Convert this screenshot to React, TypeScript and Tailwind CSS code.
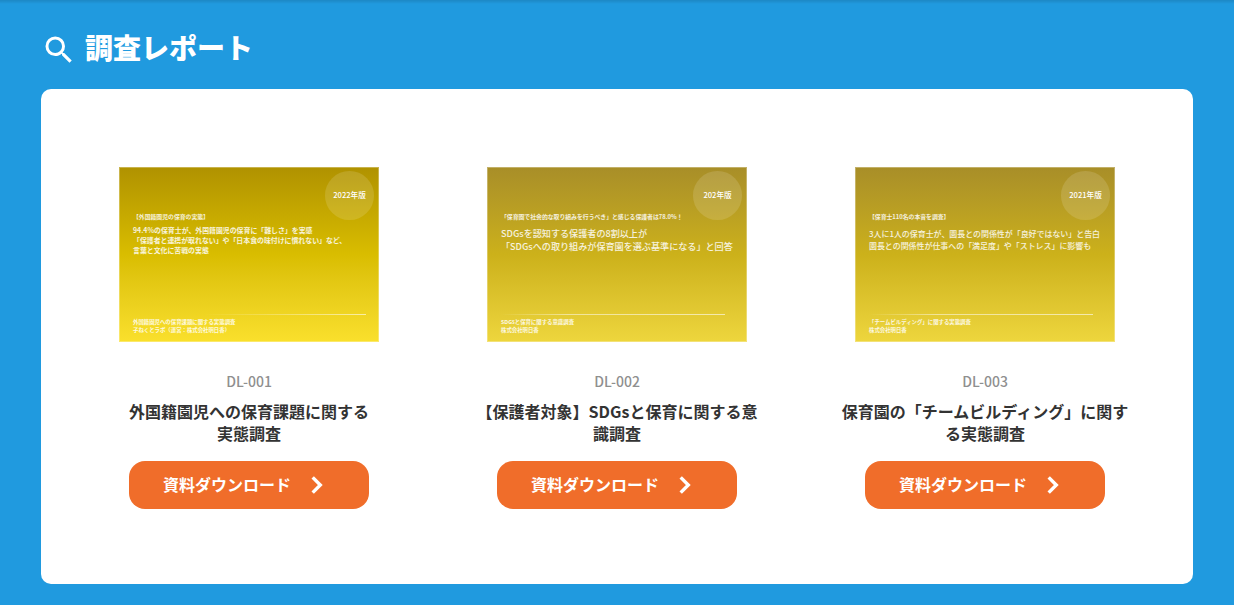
import React from "react"
import { MdSearch } from "react-icons/md"

type Report = {
  id: string
  title: string[]
  badge: string
  lead: string
  headline: string[]
  footer: string[]
  bgClass: string
  headlineClass: string
  ruleClass: string
}

const reports: Report[] = [
  {
    id: "DL-001",
    title: ["外国籍園児への保育課題に関する", "実態調査"],
    badge: "2022年版",
    lead: "【外国籍園児の保育の実態】",
    headline: [
      "94.4%の保育士が、外国籍園児の保育に「難しさ」を実感",
      "「保護者と連携が取れない」や「日本食の味付けに慣れない」など、",
      "言葉と文化に苦戦の実態",
    ],
    footer: ["外国籍園児への保育課題に関する実態調査", "子ねくとラボ（運営：株式会社明日香）"],
    bgClass: "from-[#b09200] via-[#d9bd00] to-[#fae02c]",
    headlineClass: "mt-[3px] text-[6.9px] leading-[10px] font-bold",
    ruleClass: "mr-[13px] via-white/0",
  },
  {
    id: "DL-002",
    title: ["【保護者対象】SDGsと保育に関する意", "識調査"],
    badge: "202年版",
    lead: "「保育園で社会的な取り組みを行うべき」と感じる保護者は78.0%！",
    headline: ["SDGsを認知する保護者の8割以上が", "「SDGsへの取り組みが保育園を選ぶ基準になる」と回答"],
    footer: ["SDGsと保育に関する意識調査", "株式会社明日香"],
    bgClass: "from-[#a88e28] via-[#ccb11a] to-[#eed63d]",
    headlineClass: "mt-[5px] text-[9.1px] leading-[12.7px] font-medium",
    ruleClass: "mr-[22px] via-white/50",
  },
  {
    id: "DL-003",
    title: ["保育園の「チームビルディング」に関す", "る実態調査"],
    badge: "2021年版",
    lead: "【保育士110名の本音を調査】",
    headline: [
      "3人に1人の保育士が、園長との関係性が「良好ではない」と告白",
      "園長との関係性が仕事への「満足度」や「ストレス」に影響も",
    ],
    footer: ["「チームビルディング」に関する実態調査", "株式会社明日香"],
    bgClass: "from-[#a88e28] via-[#ccb11a] to-[#eed63d]",
    headlineClass: "mt-[6px] text-[7.95px] leading-[11.5px] font-medium",
    ruleClass: "mr-[22px] via-white/50",
  },
]

function ChevronIcon({ className }: { className?: string }) {
  return (
    <svg viewBox="0 0 36 36" fill="none" stroke="currentColor" strokeWidth="3.4" className={className}>
      <path d="M13.7 10.4 21.3 18l-7.6 7.6" />
    </svg>
  )
}

function Thumbnail({ report }: { report: Report }) {
  return (
    <div
      className={`relative flex h-[175px] w-[260px] flex-col bg-gradient-to-b pt-px pl-[14px] text-white/85 whitespace-nowrap shadow-[inset_0_0_0_1px_rgba(255,255,255,0.3)] ${report.bgClass}`}
    >
      <div className="absolute top-[4px] right-[5px] flex size-[49px] items-center justify-center rounded-full bg-white/13 pb-0.5 text-[7.6px] font-medium text-white">
        {report.badge}
      </div>
      <p className="mt-[44px] text-[5.85px] leading-[10px] font-bold">{report.lead}</p>
      <div className={report.headlineClass}>
        {report.headline.map((line) => (
          <p key={line}>{line}</p>
        ))}
      </div>
      <div
        className={`mt-auto h-px bg-gradient-to-r from-white/0 via-30% to-white/60 ${report.ruleClass}`}
      />
      <div className="mt-[3px] mb-[8px] text-[5.4px] leading-[8px] font-bold">
        {report.footer.map((line) => (
          <p key={line}>{line}</p>
        ))}
      </div>
    </div>
  )
}

function ReportCard({ report }: { report: Report }) {
  return (
    <div className="flex w-[368px] flex-col items-center">
      <Thumbnail report={report} />
      <p className="mt-[29px] text-sm leading-5 font-medium text-[#8f8f8f]">{report.id}</p>
      <h3 className="mt-[9px] text-center text-base leading-[22px] font-bold whitespace-nowrap text-[#333]">
        {report.title[0]}
        <br />
        {report.title[1]}
      </h3>
      <a
        href="#"
        className="mt-[17px] flex h-12 w-60 items-center justify-center gap-2 rounded-2xl bg-[#f06d2a] font-bold text-white"
      >
        <span className="pb-0.5">資料ダウンロード</span>
        <ChevronIcon className="size-9" />
      </a>
    </div>
  )
}

function App() {
  return (
    <section
      lang="ja"
      className="h-[605px] overflow-hidden bg-[#209adf] font-['Noto_Sans_CJK_JP',sans-serif]"
    >
      <div className="h-1 bg-gradient-to-b from-black/12 to-transparent" />
      <div className="px-[41px]">
        <div className="flex h-[85px] items-center gap-2 pt-[7px] text-white">
          <MdSearch className="size-9" />
          <h2 className="-mt-1.5 text-[28px] leading-10 font-black">調査レポート</h2>
        </div>
        <div className="flex h-[495px] w-[1152px] justify-center rounded-[10px] bg-white pt-[78px]">
          {reports.map((report) => (
            <ReportCard key={report.id} report={report} />
          ))}
        </div>
      </div>
    </section>
  )
}

export default App
